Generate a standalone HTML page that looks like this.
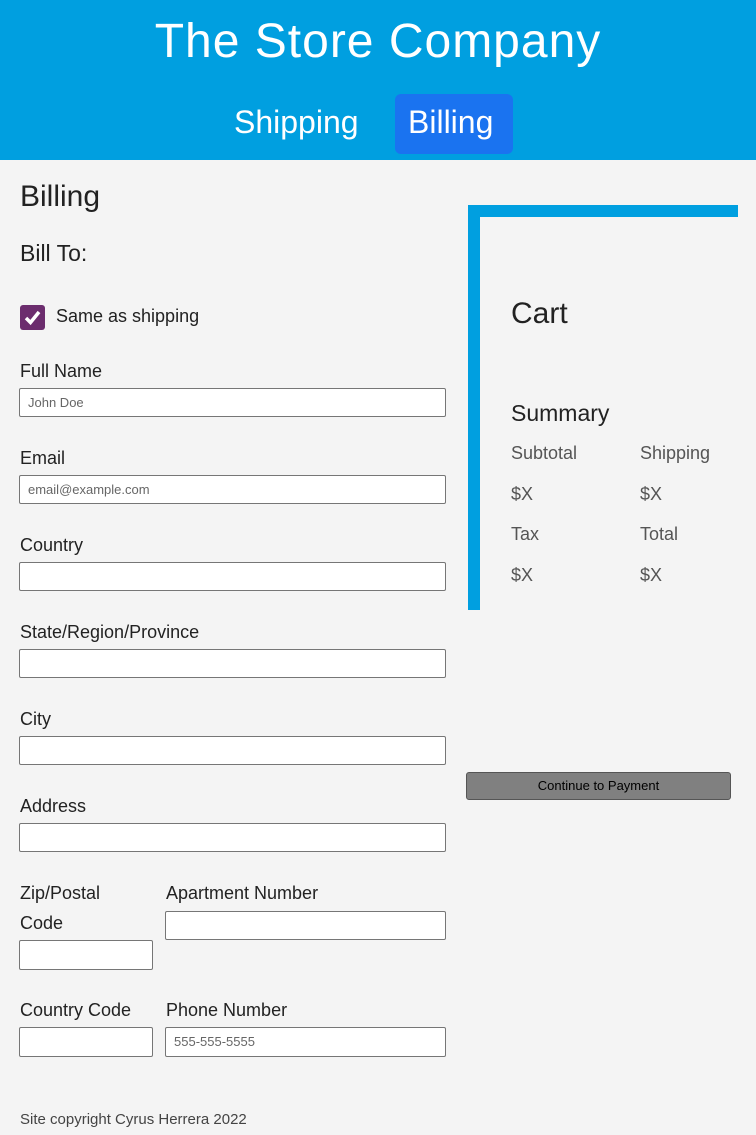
<!DOCTYPE html>
<html><head><meta charset="utf-8"><style>
body{margin:0;width:756px;height:1135px;background:#f4f4f4;font-family:"Liberation Sans",sans-serif;color:#222;position:relative;overflow:hidden}
.a{position:absolute;white-space:nowrap}
header{position:absolute;left:0;top:0;width:756px;height:160px;background:#009fe0}
.t{color:#fff;font-weight:300}
.in{position:absolute;height:27px;border:1px solid #767676;border-radius:2px;background:#fff;font-size:13px;color:#666;line-height:27px;padding-left:8px;box-sizing:border-box;height:29px}
.l{font-size:18px;color:#222}
.g{font-size:18px;color:#555}
</style></head><body>
<header>
<div class="a t" style="left:0;width:756px;text-align:center;top:14px;font-size:48px;letter-spacing:1px">The Store Company</div>
<div class="a t" style="left:234px;top:104px;font-size:32px">Shipping</div>
<div class="a" style="left:395px;top:94px;width:118px;height:60px;background:#1a73f0;border-radius:6px"></div>
<div class="a t" style="left:408px;top:104px;font-size:32px">Billing</div>
</header>
<div class="a" style="left:20px;top:180px;font-size:30px">Billing</div>
<div class="a" style="left:20px;top:240px;font-size:23px">Bill To:</div>
<div class="a" style="left:20px;top:305px;width:25px;height:25px;background:#6c2d6e;border-radius:3px"><svg width="25" height="25"><path d="M6 13l4.5 4.5L19 7" stroke="#fff" stroke-width="3.5" fill="none"/></svg></div>
<div class="a l" style="left:56px;top:306px">Same as shipping</div>
<div class="a l" style="left:20px;top:361px">Full Name</div>
<div class="in" style="left:19px;top:388px;width:427px">John Doe</div>
<div class="a l" style="left:20px;top:448px">Email</div>
<div class="in" style="left:19px;top:475px;width:427px">email@example.com</div>
<div class="a l" style="left:20px;top:535px">Country</div>
<div class="in" style="left:19px;top:562px;width:427px"></div>
<div class="a l" style="left:20px;top:622px">State/Region/Province</div>
<div class="in" style="left:19px;top:649px;width:427px"></div>
<div class="a l" style="left:20px;top:709px">City</div>
<div class="in" style="left:19px;top:736px;width:427px"></div>
<div class="a l" style="left:20px;top:796px">Address</div>
<div class="in" style="left:19px;top:823px;width:427px"></div>
<div class="a l" style="left:20px;top:878px;line-height:30px;white-space:normal;width:110px">Zip/Postal Code</div>
<div class="in" style="left:19px;top:940px;width:134px;height:30px"></div>
<div class="a l" style="left:166px;top:883px">Apartment Number</div>
<div class="in" style="left:165px;top:911px;width:281px"></div>
<div class="a l" style="left:20px;top:1000px">Country Code</div>
<div class="in" style="left:19px;top:1027px;width:134px;height:30px"></div>
<div class="a l" style="left:166px;top:1000px">Phone Number</div>
<div class="in" style="left:165px;top:1027px;width:281px;height:30px">555-555-5555</div>
<div class="a" style="left:20px;top:1111px;font-size:15px;color:#444">Site copyright Cyrus Herrera 2022</div>
<div class="a" style="left:468px;top:205px;width:270px;height:12px;background:#009fe0"></div>
<div class="a" style="left:468px;top:205px;width:12px;height:405px;background:#009fe0"></div>
<div class="a" style="left:511px;top:297px;font-size:30px">Cart</div>
<div class="a" style="left:511px;top:400px;font-size:23px">Summary</div>
<div class="a g" style="left:511px;top:443px">Subtotal</div>
<div class="a g" style="left:640px;top:443px">Shipping</div>
<div class="a g" style="left:511px;top:484px">$X</div>
<div class="a g" style="left:640px;top:484px">$X</div>
<div class="a g" style="left:511px;top:524px">Tax</div>
<div class="a g" style="left:640px;top:524px">Total</div>
<div class="a g" style="left:511px;top:565px">$X</div>
<div class="a g" style="left:640px;top:565px">$X</div>
<div class="a" style="left:466px;top:772px;width:265px;height:28px;background:#808080;border:1px solid #555;border-radius:3px;box-sizing:border-box;text-align:center;font-size:13px;line-height:26px;color:#000">Continue to Payment</div>
</body></html>
